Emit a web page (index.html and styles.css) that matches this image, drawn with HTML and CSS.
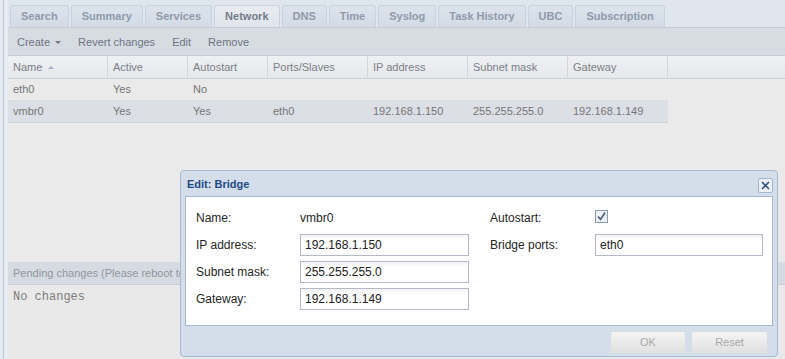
FILE: index.html
```html
<!DOCTYPE html>
<html lang="en">
<head>
    <meta charset="UTF-8">
    <title>Network</title>
    <link rel="stylesheet" href="styles.css">
</head>
<body>
    <div class="page">
        <div class="main">
            <div class="tabs">
                <div class="tab">Search</div>
                <div class="tab">Summary</div>
                <div class="tab">Services</div>
                <div class="tab active">Network</div>
                <div class="tab">DNS</div>
                <div class="tab">Time</div>
                <div class="tab">Syslog</div>
                <div class="tab">Task History</div>
                <div class="tab">UBC</div>
                <div class="tab">Subscription</div>
            </div>
            <div class="toolbar">
                <span class="tool">Create <span class="caret"></span></span>
                <span class="tool">Revert changes</span>
                <span class="tool">Edit</span>
                <span class="tool">Remove</span>
            </div>
            <div class="grid">
                <div class="grid-head">
                    <div class="cell c1">Name <span class="sort"></span></div>
                    <div class="cell c2">Active</div>
                    <div class="cell c3">Autostart</div>
                    <div class="cell c4">Ports/Slaves</div>
                    <div class="cell c5">IP address</div>
                    <div class="cell c6">Subnet mask</div>
                    <div class="cell c7">Gateway</div>
                </div>
                <div class="row">
                    <div class="cell c1">eth0</div>
                    <div class="cell c2">Yes</div>
                    <div class="cell c3">No</div>
                    <div class="cell c4"></div>
                    <div class="cell c5"></div>
                    <div class="cell c6"></div>
                    <div class="cell c7"></div>
                </div>
                <div class="row selected">
                    <div class="cell c1">vmbr0</div>
                    <div class="cell c2">Yes</div>
                    <div class="cell c3">Yes</div>
                    <div class="cell c4">eth0</div>
                    <div class="cell c5">192.168.1.150</div>
                    <div class="cell c6">255.255.255.0</div>
                    <div class="cell c7">192.168.1.149</div>
                </div>
            </div>
            <div class="pending-head"><span class="pending-title">Pending changes (Please reboot to activate changes)</span></div>
            <div class="pending-body">No changes</div>
        </div>
    </div>

    <div class="dialog">
        <div class="dialog-head">
            <span class="dialog-title">Edit: Bridge</span>
            <span class="close">
                <svg width="13" height="13" viewBox="0 0 13 13"><path d="M3 3 L10 10 M10 3 L3 10" stroke="#2d4f86" stroke-width="1.6" fill="none"/></svg>
            </span>
        </div>
        <div class="dialog-body">
            <div class="form">
                <label>Name:</label>
                <div class="value">vmbr0</div>
                <div></div>
                <label>Autostart:</label>
                <div class="value">
                    <svg class="check" width="13" height="13" viewBox="0 0 13 13"><rect x="0.5" y="0.5" width="12" height="12" fill="#eef1f6" stroke="#8a9bb4"/><path d="M3 6.5 L5.5 9.5 L10 2.5" stroke="#4a5a80" stroke-width="1.6" fill="none"/></svg>
                </div>

                <label>IP address:</label>
                <div class="input">192.168.1.150</div>
                <div></div>
                <label>Bridge ports:</label>
                <div class="input">eth0</div>

                <label>Subnet mask:</label>
                <div class="input">255.255.255.0</div>
                <div></div>
                <div></div>
                <div></div>

                <label>Gateway:</label>
                <div class="input">192.168.1.149</div>
            </div>
        </div>
        <div class="dialog-foot">
            <span class="btn ok">OK</span>
            <span class="btn reset">Reset</span>
        </div>
    </div>
</body>
</html>
```

FILE: styles.css
```css
body {
    margin: 0;
    background-color: #e6eaf0;
    font-family: "Liberation Sans", Arial, sans-serif;
    font-size: 11px;
    overflow: hidden;
}
.page {
    height: 359px;
    padding-left: 3px;
}
.main {
    height: 359px;
    border-left: 1px solid #bcc7d5;
    padding-left: 4px;
    background-color: #e8ecf2;
}
.tabs {
    display: flex;
    gap: 2px;
    height: 22px;
    padding: 5px 0 0 2px;
    border-bottom: 1px solid #c3ccd8;
    background-color: #e0e6ed;
}
.tab {
    height: 21px;
    line-height: 21px;
    padding: 0 10px;
    border: 1px solid #c9d2de;
    border-bottom: none;
    border-radius: 3px 3px 0 0;
    background: linear-gradient(#dce3eb, #d3dbe5);
    color: #909aab;
    font-weight: bold;
}
.tab.active {
    background: linear-gradient(#e8ecf1, #e0e5eb);
    color: #747c89;
}
.toolbar {
    display: flex;
    align-items: center;
    gap: 15px;
    height: 27px;
    padding-left: 8px;
    background-color: #d7dce3;
    border-bottom: 1px solid #c8ced8;
}
.tool {
    color: #6e7482;
    padding: 0 1px;
}
.caret {
    display: inline-block;
    margin-left: 2px;
    vertical-align: 2px;
    border-left: 3px solid transparent;
    border-right: 3px solid transparent;
    border-top: 3px solid #6e7482;
}
.grid {
    height: 206px;
    background-color: #eaeaea;
}
.grid-head {
    display: flex;
    height: 22px;
    background: linear-gradient(#eef0f3, #e6e8ec);
    border-bottom: 1px solid #cfd3d9;
}
.grid-head .cell {
    border-right: 1px solid #d3d7dd;
    color: #7a7f88;
    line-height: 22px;
}
.cell {
    box-sizing: border-box;
    padding-left: 5px;
    white-space: nowrap;
    overflow: hidden;
}
.c1 { width: 100px; }
.c2 { width: 80px; }
.c3 { width: 80px; }
.c4 { width: 100px; }
.c5 { width: 100px; }
.c6 { width: 100px; }
.c7 { width: 100px; }
.sort {
    display: inline-block;
    margin-left: 3px;
    vertical-align: 2px;
    border-left: 3px solid transparent;
    border-right: 3px solid transparent;
    border-bottom: 3px solid #a9b3c2;
}
.row {
    display: flex;
    width: 660px;
    height: 21px;
    line-height: 21px;
    color: #757575;
    border-bottom: 1px dotted #cfd2d8;
}
.row.selected {
    background-color: #dcdfe6;
    border-bottom: 1px dotted #c4c8d0;
}
.pending-head {
    height: 22px;
    line-height: 22px;
    padding-left: 5px;
    background-color: #d6dae1;
    border-bottom: 1px solid #c9ced6;
    color: #9097a2;
}
.pending-title {
    display: inline-block;
    max-width: 167px;
    overflow: hidden;
    white-space: nowrap;
    vertical-align: top;
}
.pending-body {
    padding: 5px 0 0 5px;
    background-color: #e9e9e9;
    height: 80px;
    font-family: "Liberation Mono", "Courier New", monospace;
    font-size: 12px;
    color: #7d7d7d;
}
.dialog {
    position: absolute;
    left: 180px;
    top: 170px;
    width: 588px;
    height: 185px;
    padding: 0 4px 0 4px;
    border: 1px solid #a6bad4;
    border-radius: 4px;
    background-color: #d3deea;
    display: flex;
    flex-direction: column;
}
.dialog-head {
    display: flex;
    align-items: center;
    justify-content: space-between;
    height: 25px;
    padding-left: 2px;
}
.dialog-title {
    color: #1f4a86;
    font-weight: bold;
    font-size: 11px;
}
.close {
    display: flex;
    align-items: center;
    justify-content: center;
    width: 13px;
    height: 13px;
    border: 1px solid #9fb4cf;
    border-radius: 2px;
    background-color: #eef3f9;
    margin-top: 3px;
}
.dialog-body {
    height: 118px;
    padding: 10px 10px 0 10px;
    background-color: #ffffff;
    border: 1px solid #a3b8d4;
}
.form {
    display: grid;
    grid-template-columns: 104px 169px 21px 105px 168px;
    grid-auto-rows: 22px;
    row-gap: 5px;
    font-size: 12px;
    color: #262626;
}
.form label {
    line-height: 22px;
}
.value {
    line-height: 22px;
    display: flex;
    align-items: center;
}
.check {
    margin-top: -4px;
}
.input {
    box-sizing: border-box;
    height: 22px;
    line-height: 20px;
    padding-left: 4px;
    border: 1px solid #b5b8c8;
    background: linear-gradient(#f3f3f3, #ffffff 5px);
    color: #222222;
}
.dialog-foot {
    display: flex;
    justify-content: flex-end;
    gap: 7px;
    padding: 6px 6px 0 0;
}
.btn {
    box-sizing: border-box;
    height: 21px;
    line-height: 21px;
    text-align: center;
    border-radius: 2px;
    background: linear-gradient(#f4f4f4, #e0e0e0);
    color: #a9a9a9;
    font-size: 11px;
}
.ok { width: 74px; }
.reset { width: 75px; }
```
